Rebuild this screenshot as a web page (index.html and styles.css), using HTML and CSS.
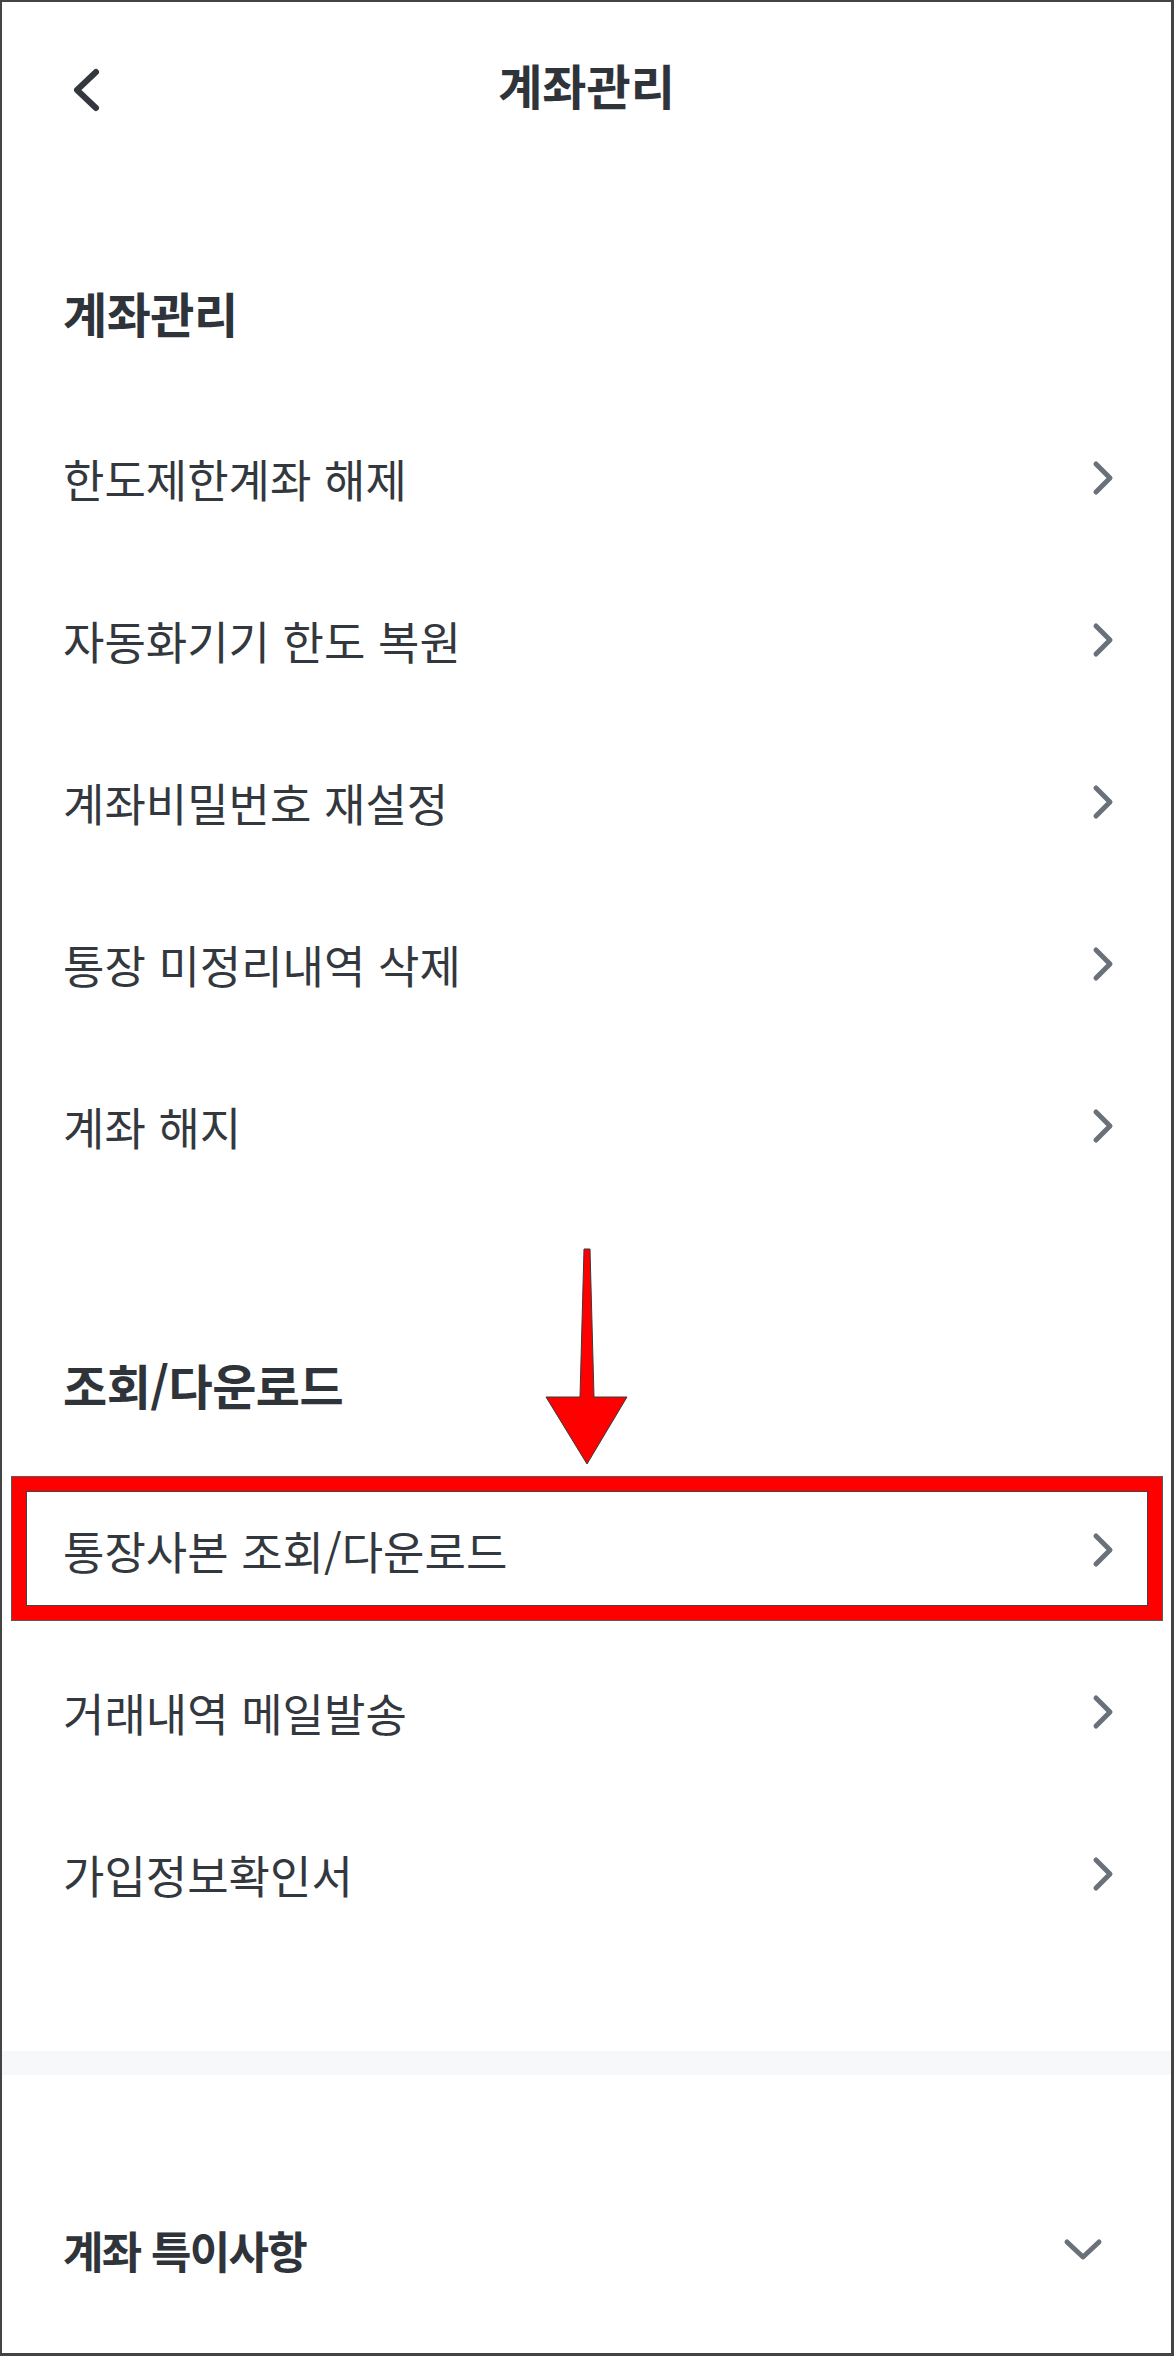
FILE: index.html
```html
<!DOCTYPE html>
<html lang="ko">
<head>
<meta charset="utf-8">
<title>계좌관리</title>
<link rel="stylesheet" href="styles.css">
</head>
<body>
<div class="frame">
  <header class="topbar">
    <button class="back" aria-label="뒤로">
      <svg width="48" height="48" viewBox="0 0 48 48"><polyline points="33,6 14,24 33,42" fill="none" stroke="#33383e" stroke-width="6" stroke-linecap="round" stroke-linejoin="round"/></svg>
    </button>
    <h1 class="title">계좌관리</h1>
    <span></span>
  </header>

  <section class="group g1">
    <h2 class="group-title">계좌관리</h2>
    <ul class="menu">
      <li class="menu-item"><span class="label">한도제한계좌 해제</span><svg class="chev" width="24" height="36" viewBox="0 0 24 36"><polyline points="5,4 19,18 5,32"/></svg></li>
      <li class="menu-item"><span class="label">자동화기기 한도 복원</span><svg class="chev" width="24" height="36" viewBox="0 0 24 36"><polyline points="5,4 19,18 5,32"/></svg></li>
      <li class="menu-item"><span class="label">계좌비밀번호 재설정</span><svg class="chev" width="24" height="36" viewBox="0 0 24 36"><polyline points="5,4 19,18 5,32"/></svg></li>
      <li class="menu-item"><span class="label">통장 미정리내역 삭제</span><svg class="chev" width="24" height="36" viewBox="0 0 24 36"><polyline points="5,4 19,18 5,32"/></svg></li>
      <li class="menu-item"><span class="label">계좌 해지</span><svg class="chev" width="24" height="36" viewBox="0 0 24 36"><polyline points="5,4 19,18 5,32"/></svg></li>
    </ul>
  </section>

  <section class="group g2">
    <h2 class="group-title">조회/다운로드</h2>
    <ul class="menu">
      <li class="menu-item"><span class="label">통장사본 조회/다운로드</span><svg class="chev" width="24" height="36" viewBox="0 0 24 36"><polyline points="5,4 19,18 5,32"/></svg></li>
      <li class="menu-item"><span class="label">거래내역 메일발송</span><svg class="chev" width="24" height="36" viewBox="0 0 24 36"><polyline points="5,4 19,18 5,32"/></svg></li>
      <li class="menu-item"><span class="label">가입정보확인서</span><svg class="chev" width="24" height="36" viewBox="0 0 24 36"><polyline points="5,4 19,18 5,32"/></svg></li>
    </ul>
  </section>

  <div class="band"></div>

  <div class="accordion">
    <span class="acc-label">계좌 특이사항</span>
    <svg class="chev-down" width="40" height="28" viewBox="0 0 40 28"><polyline points="4,6 20,21 36,6"/></svg>
  </div>

  <div class="annot-box"></div>
  <svg class="annot-arrow" width="95" height="228" viewBox="0 0 95 228"><polygon points="44,5 50,5 54,153 87,153 47,220 6,153 40,153" fill="#ff0000" stroke="#3a3a3a" stroke-width="1"/></svg>
</div>
</body>
</html>
```

FILE: styles.css
```css
* { box-sizing: border-box; }

body {
  margin: 0;
  background: #ffffff;
}

.frame {
  position: relative;
  width: 1174px;
  height: 2356px;
  border-style: solid;
  border-color: #444444;
  border-width: 2px 3px 3px 2px;
  overflow: hidden;
  background: #ffffff;
  font-family: "Noto Sans CJK KR", "Noto Sans", sans-serif;
  color: #33383e;
}

.topbar {
  display: grid;
  grid-template-columns: 1fr auto 1fr;
  align-items: center;
  height: 176px;
}

.back {
  justify-self: start;
  margin-left: 61px;
  width: 48px;
  height: 48px;
  padding: 0;
  border: 0;
  background: none;
  display: block;
}
.back svg { display: block; }

.title {
  margin: 0;
  padding-bottom: 10px;
  font-size: 48px;
  font-weight: 700;
  letter-spacing: 0;
  color: #2f343a;
  line-height: 1.2;
}

.g1 { padding-top: 94px; }
.g2 { padding-top: 137px; }

.group-title {
  margin: 0 0 45px;
  height: 80px;
  display: flex;
  align-items: center;
  padding-left: 61px;
  font-size: 48px;
  font-weight: 700;
  letter-spacing: -0.5px;
  color: #2f343a;
}

.menu {
  list-style: none;
  margin: 0;
  padding: 0;
}

.menu-item {
  height: 162px;
  display: flex;
  align-items: center;
  justify-content: space-between;
  padding: 0 56px 0 61px;
}

.label {
  font-size: 45px;
  font-weight: 400;
  letter-spacing: 0;
  color: #33383e;
}

.chev polyline,
.chev-down polyline {
  fill: none;
  stroke: #6b7179;
  stroke-width: 5;
  stroke-linecap: round;
  stroke-linejoin: round;
}

.band {
  margin-top: 96px;
  height: 24px;
  background: #f7f8fa;
}

.accordion {
  margin-top: 94px;
  height: 162px;
  display: flex;
  align-items: center;
  justify-content: space-between;
  padding: 0 68px 0 61px;
}

.acc-label {
  font-size: 44px;
  font-weight: 700;
  letter-spacing: -1.75px;
  color: #2f343a;
}

.annot-box {
  position: absolute;
  left: 10px;
  top: 1475px;
  width: 1150px;
  height: 143px;
  border: 14px solid #ff0000;
  outline: 1px solid #5a5a5a;
  box-shadow: inset 0 0 0 1px #444444;
}

.annot-arrow {
  position: absolute;
  left: 538px;
  top: 1242px;
}
```
